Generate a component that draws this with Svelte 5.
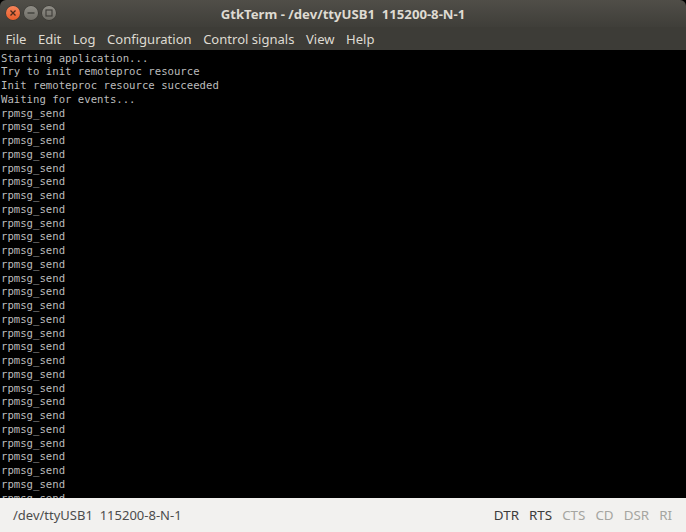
<script>
  const intro = [
    'Starting application...',
    'Try to init remoteproc resource',
    'Init remoteproc resource succeeded',
    'Waiting for events...'
  ];
  const lines = [...intro, ...Array(29).fill('rpmsg_send')];
  const menus = ['File', 'Edit', 'Log', 'Configuration', 'Control signals', 'View', 'Help'];
  const signals = [
    { name: 'DTR', on: true },
    { name: 'RTS', on: true },
    { name: 'CTS', on: false },
    { name: 'CD', on: false },
    { name: 'DSR', on: false },
    { name: 'RI', on: false }
  ];
</script>

<div class="window">
  <header class="titlebar">
    <div class="controls">
      <span class="btn close">
        <svg width="8" height="8" viewBox="0 0 8 8"><path d="M1.5 1.5L6.5 6.5M6.5 1.5L1.5 6.5" stroke="#4a2a1c" stroke-width="1.3" /></svg>
      </span>
      <span class="btn">
        <svg width="8" height="8" viewBox="0 0 8 8"><path d="M0.5 4H7.5" stroke="#3c3b37" stroke-width="1.3" /></svg>
      </span>
      <span class="btn">
        <svg width="8" height="8" viewBox="0 0 8 8"><rect x="1" y="1" width="6" height="6" fill="none" stroke="#3c3b37" stroke-width="1.1" /></svg>
      </span>
    </div>
    <span class="title">GtkTerm - /dev/ttyUSB1&nbsp; 115200-8-N-1</span>
  </header>

  <nav class="menubar">
    {#each menus as menu}
      <span class="menu">{menu}</span>
    {/each}
  </nav>

  <main class="terminal">
    {#each lines as line}
      <div class="line">{line}</div>
    {/each}
  </main>

  <footer class="statusbar">
    <span class="port">/dev/ttyUSB1&nbsp; 115200-8-N-1</span>
    <div class="signals">
      {#each signals as signal}
        <span class="signal" class:on={signal.on}>{signal.name}</span>
      {/each}
    </div>
  </footer>
</div>

<style>
  :global(body) {
    margin: 0;
    background: #000;
  }

  .window {
    width: 686px;
    height: 532px;
    display: flex;
    flex-direction: column;
    overflow: hidden;
    font-family: "Noto Sans", "Open Sans", sans-serif;
  }

  .titlebar {
    height: 27px;
    flex: none;
    position: relative;
    display: flex;
    align-items: center;
    justify-content: center;
    background: linear-gradient(#504e48, #3f3e39);
    border-radius: 6px 6px 0 0;
  }

  .controls {
    position: absolute;
    left: 6px;
    top: 6px;
    display: flex;
    gap: 4px;
  }

  .btn {
    width: 14px;
    height: 14px;
    border-radius: 50%;
    display: flex;
    align-items: center;
    justify-content: center;
    background: linear-gradient(#8f8d86, #6f6d66);
    box-shadow: 0 0 0 0.5px #35342f;
  }

  .close {
    background: linear-gradient(#f7845a, #e85e2b);
  }

  .title {
    font-size: 13.15px;
    font-weight: 700;
    color: #dfdbd2;
  }

  .menubar {
    height: 23px;
    flex: none;
    display: flex;
    align-items: center;
    gap: 11.5px;
    padding-left: 5.5px;
    background: #3d3c37;
    color: #dfdbd2;
    font-size: 13.05px;
  }

  .terminal {
    flex: 1;
    min-height: 0;
    overflow: hidden;
    background: #000;
    color: #bcbcbc;
    padding: 1.5px 0 0 1px;
    font-family: "DejaVu Sans Mono", monospace;
    font-size: 10.65px;
    line-height: 13.75px;
  }

  .line {
    height: 13.75px;
    white-space: pre;
  }

  .statusbar {
    height: 34px;
    flex: none;
    display: flex;
    align-items: center;
    justify-content: space-between;
    padding: 0 14px 0 13px;
    background: #f2f1ef;
    font-size: 13px;
    color: #4c4c4c;
  }

  .signals {
    display: flex;
    gap: 10px;
    font-size: 13.4px;
  }

  .signal {
    color: #a5a5a0;
  }

  .signal.on {
    color: #3c3c3c;
  }
</style>
